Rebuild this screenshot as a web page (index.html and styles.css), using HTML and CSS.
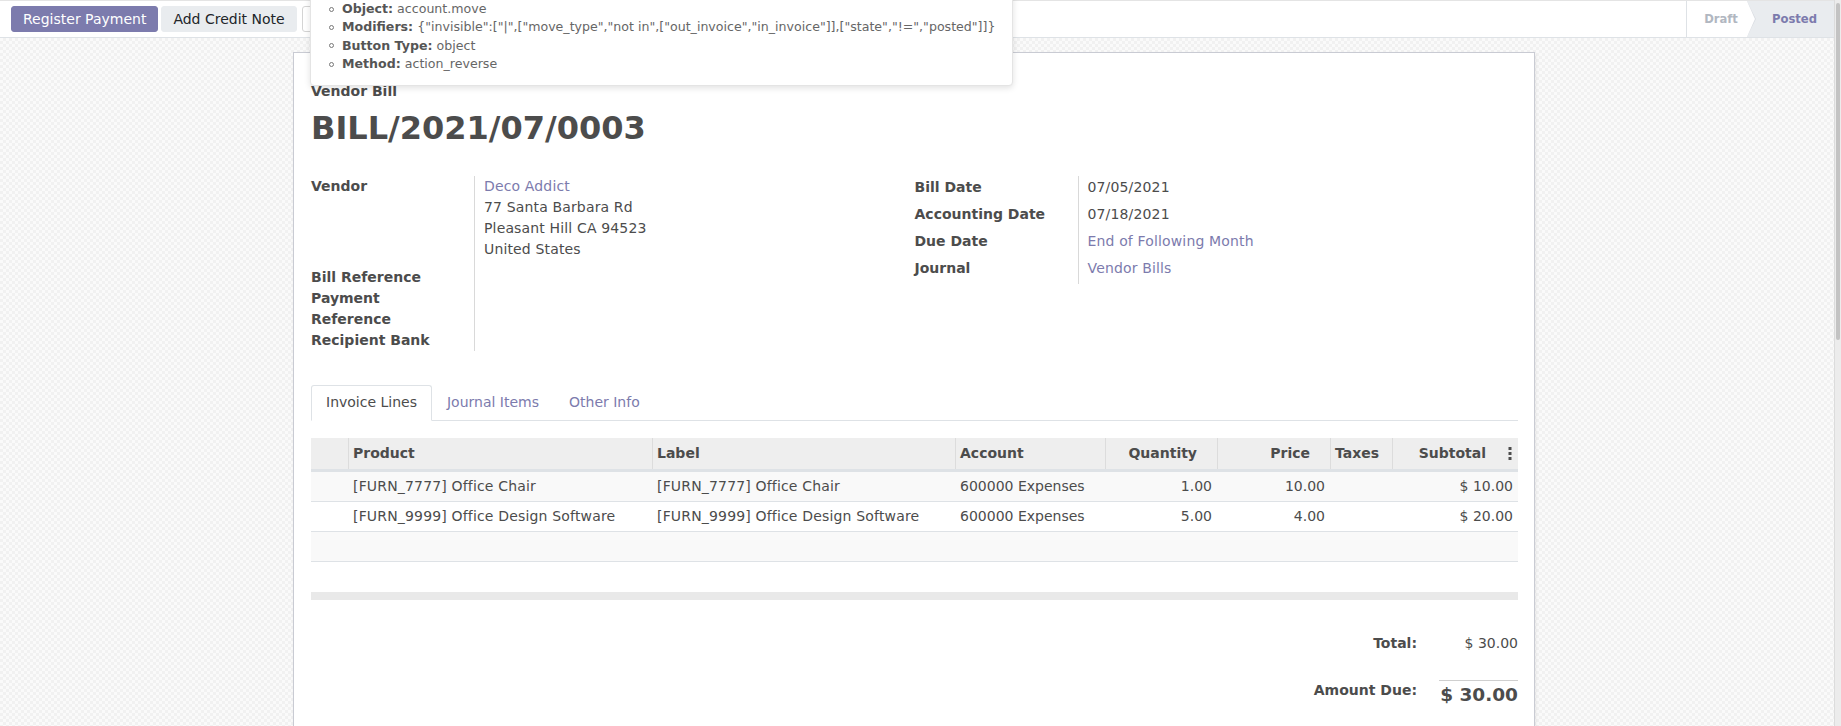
FILE: index.html
```html
<!DOCTYPE html>
<html lang="en">
<head>
<meta charset="utf-8">
<title>BILL/2021/07/0003</title>
<link rel="stylesheet" href="styles.css">
</head>
<body>
<div class="app">
  <div class="main">
    <div class="cp">
      <div class="cp-buttons">
        <button class="btn btn-primary">Register Payment</button>
        <button class="btn btn-secondary">Add Credit Note</button>
        <button class="btn btn-light">‹ Reset to Draft</button>
      </div>
      <div class="statusbar">
        <div class="status status-draft">Draft</div>
        <div class="status status-posted">Posted</div>
      </div>
    </div>
    <div class="content">
      <div class="sheet">
        <div class="move-type">Vendor Bill</div>
        <h1 class="title">BILL/2021/07/0003</h1>
        <div class="groups">
          <div class="group">
            <div class="lbl">Vendor</div>
            <div class="val vendor">
              <a class="link">Deco Addict</a>
              <div>77 Santa Barbara Rd</div>
              <div>Pleasant Hill CA 94523</div>
              <div>United States</div>
            </div>
            <div class="lbl">Bill Reference</div>
            <div class="val"></div>
            <div class="lbl">Payment Reference</div>
            <div class="val"></div>
            <div class="lbl">Recipient Bank</div>
            <div class="val"></div>
          </div>
          <div class="group group-r">
            <div class="lbl">Bill Date</div>
            <div class="val">07/05/2021</div>
            <div class="lbl">Accounting Date</div>
            <div class="val">07/18/2021</div>
            <div class="lbl">Due Date</div>
            <div class="val"><a class="link">End of Following Month</a></div>
            <div class="lbl">Journal</div>
            <div class="val"><a class="link">Vendor Bills</a></div>
          </div>
        </div>

        <div class="tabs">
          <div class="tab active">Invoice Lines</div>
          <div class="tab">Journal Items</div>
          <div class="tab">Other Info</div>
        </div>

        <div class="lines">
          <div class="row head">
            <div class="c"></div>
            <div class="c">Product</div>
            <div class="c">Label</div>
            <div class="c">Account</div>
            <div class="c num">Quantity</div>
            <div class="c num">Price</div>
            <div class="c">Taxes</div>
            <div class="c num last">Subtotal<svg class="kebab" width="4" height="13" viewBox="0 0 4 13"><rect x="0.5" y="0" width="3" height="3"/><rect x="0.5" y="5" width="3" height="3"/><rect x="0.5" y="10" width="3" height="3"/></svg></div>
          </div>
          <div class="row body odd">
            <div class="c"></div>
            <div class="c code">[FURN_7777] Office Chair</div>
            <div class="c code">[FURN_7777] Office Chair</div>
            <div class="c">600000 Expenses</div>
            <div class="c num">1.00</div>
            <div class="c num">10.00</div>
            <div class="c"></div>
            <div class="c num">$ 10.00</div>
          </div>
          <div class="row body">
            <div class="c"></div>
            <div class="c code">[FURN_9999] Office Design Software</div>
            <div class="c code">[FURN_9999] Office Design Software</div>
            <div class="c">600000 Expenses</div>
            <div class="c num">5.00</div>
            <div class="c num">4.00</div>
            <div class="c"></div>
            <div class="c num">$ 20.00</div>
          </div>
          <div class="row body odd empty"></div>
          <div class="row body empty last-row"></div>
          <div class="foot"></div>
        </div>

        <div class="totals">
          <div class="tot-label">Total:</div>
          <div class="tot-val">$ 30.00</div>
          <div class="tot-label due">Amount Due:</div>
          <div class="tot-val due">$ 30.00</div>
        </div>
      </div>
    </div>
  </div>
  <div class="vscroll"><div class="thumb"></div></div>

  <div class="tip">
    <ul>
      <li><span class="dot"></span><b>Object:</b>&nbsp;account.move</li>
      <li><span class="dot"></span><b>Modifiers:</b>&nbsp;{"invisible":["|",["move_type","not in",["out_invoice","in_invoice"]],["state","!=","posted"]]}</li>
      <li><span class="dot"></span><b>Button Type:</b>&nbsp;object</li>
      <li><span class="dot"></span><b>Method:</b>&nbsp;action_reverse</li>
    </ul>
  </div>
</div>
</body>
</html>
```

FILE: styles.css
```css
* { box-sizing: border-box; }
html, body { margin: 0; padding: 0; }
body {
  width: 1841px;
  height: 726px;
  overflow: hidden;
  font-family: "DejaVu Sans", "Liberation Sans", sans-serif;
  font-size: 14px;
  color: #4c4c4c;
  background: #fff;
}
.app { position: relative; display: flex; height: 726px; }
.main { flex: 1; min-width: 0; display: flex; flex-direction: column; }

/* fake scrollbar */
.vscroll {
  width: 7px;
  flex: none;
  background: #ececec;
  border-left: 1px solid #dcdcdc;
  padding: 3px 1px 0 1px;
}
.vscroll .thumb { height: 337px; background: #c3c3c3; border-radius: 2px; }

/* control panel */
.cp {
  flex: none;
  height: 38px;
  background: #fff;
  border-top: 1px solid #e4e4e4;
  border-bottom: 1px solid #dee2e6;
  display: flex;
  align-items: center;
  justify-content: space-between;
  padding-left: 11px;
}
.cp-buttons { display: flex; align-items: center; gap: 3px; }
.btn {
  font: inherit;
  height: 26px;
  line-height: 24px;
  padding: 0 11px;
  border-radius: 3px;
  border: 1px solid transparent;
  white-space: nowrap;
}
.btn-primary { background: #7c7bad; border-color: #7c7bad; color: #fff; }
.btn-secondary { background: #e9ecef; border-color: #e9ecef; color: #212529; }
.btn-light { background: #fff; border-color: #d4d4d4; color: #666; margin-left: 2px; }

.statusbar { display: flex; align-self: stretch; }
.status {
  display: flex;
  align-items: center;
  font-weight: bold;
  font-size: 11.6px;
  position: relative;
}
.status-draft {
  color: #b1b7c1;
  background: #fff;
  border-left: 1px solid #dee2e6;
  padding: 0 9px 0 17px;
}
.status-posted {
  color: #7c7bad;
  background: #e9ecef;
  padding: 0 17px 0 25px;
}
.status-posted::before,
.status-posted::after {
  content: "";
  position: absolute;
  left: 0;
  top: 0;
  bottom: 0;
  clip-path: polygon(0 0, 100% 50%, 0 100%);
}
.status-posted::before { width: 9px; background: #d9dce1; }
.status-posted::after { width: 8px; background: #fff; }

/* content */
.content {
  flex: 1;
  overflow: hidden;
  padding-top: 14px;
  background-color: #f6f6f6;
  background-image: repeating-conic-gradient(#f1f1f1 0% 25%, #fafafa 0% 50%);
  background-size: 6px 6px;
}
.sheet {
  width: 1242px;
  min-height: 760px;
  margin-left: 293px;
  background: #fff;
  border: 1px solid #c9cbd3;
  box-shadow: 1px 2px 3px rgba(0, 0, 0, 0.08);
  padding: 28px 16px 0 17px;
}
.move-type { font-weight: bold; line-height: 21px; }
.title {
  margin: 6px 0 0;
  font-size: 32px;
  line-height: 40px;
  font-weight: bold;
  color: #4c4c4c;
}
.link { color: #7c7bad; text-decoration: none; }

.groups { display: flex; margin-top: 28px; }
.group {
  flex: 1 1 0;
  display: grid;
  grid-template-columns: 164px 1fr;
  align-content: start;
  line-height: 21px;
}
.lbl {
  font-weight: bold;
  border-right: 1px solid #d9d9d9;
  padding-right: 16px;
}
.val { padding-left: 9px; letter-spacing: 0.15px; }
.vendor { padding-bottom: 7px; }
.group-r .lbl, .group-r .val { padding-top: 1px; padding-bottom: 5px; }

/* tabs */
.tabs {
  display: flex;
  margin-top: 34px;
  border-bottom: 1px solid #dee2e6;
}
.tab {
  padding: 6px 14px 7px;
  line-height: 21px;
  border: 1px solid transparent;
  border-radius: 3px 3px 0 0;
  margin-bottom: -1px;
  color: #7c7bad;
}
.tab.active {
  color: #4c4c4c;
  background: #fff;
  border-color: #dee2e6 #dee2e6 #fff;
}

/* lines */
.lines { margin-top: 17px; }
.row {
  display: grid;
  grid-template-columns: 37px 304px 303px 150px 112px 113px 62px 126px;
}
.c { white-space: nowrap; overflow: hidden; }
.head {
  height: 34px;
  background: #eeeeee;
  border-bottom: 3px solid #dee2e6;
  font-weight: bold;
  line-height: 31px;
}
.head .c { padding: 0 4px; }
.head .c + .c { border-left: 1px solid #dcdcdc; }
.head .num { text-align: right; padding-right: 20px; }
.head .last {
  display: flex;
  justify-content: flex-end;
  align-items: center;
  padding-right: 6px;
}
.kebab { fill: #4c4c4c; margin-left: 22px; }
.body {
  height: 30px;
  line-height: 29px;
  border-bottom: 1px solid #dee2e6;
  background: #fff;
}
.body.odd { background: #f9f9f9; }
.body .c { padding: 0 5px; }
.body .code { letter-spacing: 0.17px; }
.body .num { text-align: right; }
.last-row { border-bottom: 0; }
.foot { height: 8px; background: #e9e9e9; }

/* totals */
.totals {
  display: grid;
  grid-template-columns: auto 79px;
  column-gap: 22px;
  justify-content: end;
  margin-top: 33px;
  line-height: 21px;
}
.tot-label { font-weight: bold; text-align: right; }
.tot-val { text-align: right; }
.tot-label.due { margin-top: 26px; }
.tot-val.due {
  margin-top: 26px;
  border-top: 1px solid #cfcfcf;
  font-weight: bold;
  font-size: 18.5px;
  line-height: 28px;
}

/* debug tooltip */
.tip {
  position: absolute;
  left: 310px;
  top: -8px;
  width: 703px;
  background: #fff;
  border: 1px solid #e4e4e4;
  border-radius: 4px;
  box-shadow: 0 2px 6px rgba(0, 0, 0, 0.12);
  padding: 7px 0 12px;
  font-size: 12.6px;
  color: #666;
}
.tip ul { margin: 0; padding: 0; list-style: none; }
.tip li {
  display: flex;
  align-items: center;
  line-height: 18.33px;
  padding-left: 18px;
  white-space: nowrap;
}
.tip b { color: #555; }
.dot {
  flex: none;
  width: 5px;
  height: 5px;
  border: 1px solid #777;
  border-radius: 50%;
  margin-right: 8px;
}
```
